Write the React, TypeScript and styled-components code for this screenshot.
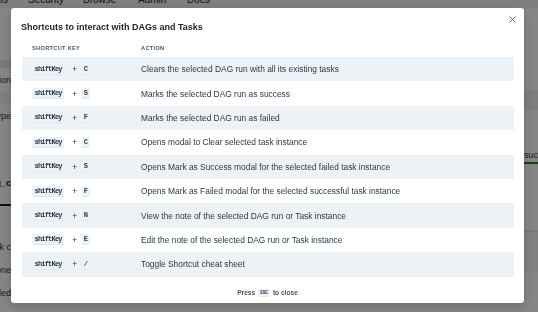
import React from 'react';
import styled, { createGlobalStyle } from 'styled-components';

const GlobalStyle = createGlobalStyle`
  html, body {
    margin: 0;
    padding: 0;
  }
  body {
    width: 538px;
    height: 312px;
    overflow: hidden;
    background: #fff;
    font-family: "Liberation Sans", Arial, sans-serif;
  }
`;

// page behind the modal
const Page = styled.div`
  display: flex;
  flex-direction: column;
  height: 312px;
`;

const TopNav = styled.div`
  display: flex;
  align-items: flex-end;
  height: 8px;
  background: #f2f2f2;
  overflow: hidden;
`;

const NavLink = styled.span<{ $w: number; $clip?: boolean }>`
  width: ${(p) => p.$w}px;
  box-sizing: border-box;
  flex: none;
  display: flex;
  justify-content: ${(p) => (p.$clip ? 'flex-end' : 'flex-start')};
  padding-right: ${(p) => (p.$clip ? 20 : 0)}px;
  overflow: hidden;
  font-size: 10px;
  line-height: 10px;
  margin-bottom: 3px;
  color: #222;
  white-space: nowrap;
`;

const PageBody = styled.div`
  flex: 1;
  display: flex;
`;

const SideCol = styled.div<{ $w: number }>`
  width: ${(p) => p.$w}px;
  flex: none;
  display: flex;
  flex-direction: column;
  overflow: hidden;
`;

const SideRow = styled.div<{ $h: number; $bg?: string; $end?: boolean; $bold?: boolean; $line?: string }>`
  height: ${(p) => p.$h}px;
  flex: none;
  display: flex;
  align-items: center;
  justify-content: ${(p) => (p.$end ? 'flex-end' : 'flex-start')};
  background: ${(p) => p.$bg || 'transparent'};
  border-bottom: ${(p) => (p.$line ? `2px solid ${p.$line}` : 'none')};
  font-size: 9px;
  font-weight: ${(p) => (p.$bold ? 700 : 400)};
  color: ${(p) => (p.$bold ? '#111' : '#333')};
  white-space: nowrap;
`;

const MainArea = styled.div`
  flex: 1;
`;

// modal
const Overlay = styled.div`
  position: fixed;
  inset: 0;
  background: rgba(0, 0, 0, 0.48);
  display: flex;
  align-items: flex-start;
  padding: 8px 0 0 11px;
`;

const Modal = styled.section`
  position: relative;
  width: 513px;
  height: 295px;
  background: #fff;
  border-radius: 3px;
  box-shadow: 0 4px 10px rgba(0, 0, 0, 0.2);
  display: flex;
  flex-direction: column;
  box-sizing: border-box;
`;

const Header = styled.header`
  height: 30px;
  box-sizing: border-box;
  padding: 8px 10px 0;
  display: flex;
  align-items: center;
  font-size: 9px;
  font-weight: 700;
  color: #1a202c;
`;

const CloseButton = styled.button`
  position: absolute;
  top: 3px;
  right: 4px;
  width: 16px;
  height: 16px;
  padding: 0;
  border: 0;
  background: transparent;
  display: flex;
  align-items: center;
  justify-content: center;
  color: #4a5568;
`;

const Body = styled.div`
  padding: 0 10px 0 11px;
`;

const Table = styled.table`
  width: 100%;
  border-collapse: collapse;
  table-layout: fixed;
`;

const HeadCell = styled.th<{ $w?: number }>`
  width: ${(p) => (p.$w ? `${p.$w}px` : 'auto')};
  height: 19px;
  padding: 0 10px;
  text-align: left;
  font-size: 5.6px;
  font-weight: 700;
  letter-spacing: 0.06em;
  text-transform: uppercase;
  color: #4a5568;
`;

const Row = styled.tr`
  height: 24.4px;
  &:nth-of-type(odd) {
    background: #edf2f7;
  }
`;

const Cell = styled.td`
  padding: 0 10px;
  font-size: 8.4px;
  color: #2d3748;
  white-space: nowrap;
`;

const Combo = styled.div`
  display: flex;
  align-items: center;
`;

const Kbd = styled.kbd<{ $small?: boolean }>`
  display: inline-flex;
  align-items: center;
  height: ${(p) => (p.$small ? 8 : 11)}px;
  box-sizing: border-box;
  padding: 0 ${(p) => (p.$small ? 2 : 2.5)}px;
  background: #edf2f7;
  border-bottom: 1px solid #e2e8f0;
  border-radius: 2px;
  font-family: "Liberation Mono", "DejaVu Sans Mono", monospace;
  font-weight: 700;
  font-size: ${(p) => (p.$small ? 4.8 : 7)}px;
  letter-spacing: ${(p) => (p.$small ? -0.3 : -0.8)}px;
  color: #2d3748;
`;

const Plus = styled.span`
  margin: 0 4px 0 8px;
  font-size: 8.4px;
  color: #2d3748;
`;

const Footer = styled.footer`
  flex: 1;
  display: flex;
  align-items: center;
  justify-content: center;
  gap: 3px;
  padding-top: 6px;
  font-size: 6.6px;
  font-weight: 700;
  color: #4a5568;
`;

const shortcuts: [string, string][] = [
  ['C', 'Clears the selected DAG run with all its existing tasks'],
  ['S', 'Marks the selected DAG run as success'],
  ['F', 'Marks the selected DAG run as failed'],
  ['C', 'Opens modal to Clear selected task instance'],
  ['S', 'Opens Mark as Success modal for the selected failed task instance'],
  ['F', 'Opens Mark as Failed modal for the selected successful task instance'],
  ['N', 'View the note of the selected DAG run or Task instance'],
  ['E', 'Edit the note of the selected DAG run or Task instance'],
  ['/', 'Toggle Shortcut cheat sheet'],
];

const leftRows = [
  { h: 52, text: '' },
  { h: 8, text: '', bg: '#e6e6e6' },
  { h: 24, text: 'Duration' },
  { h: 12, text: '', bg: '#f4f4f4' },
  { h: 24, text: 'Run type' },
  { h: 44, text: '' },
  { h: 22, text: 'dag_c', bold: true },
  { h: 10, text: '', line: '#222' },
  { h: 30, text: '' },
  { h: 22, text: 'Task c' },
  { h: 24, text: 'Done' },
  { h: 22, text: 'Failed' },
];

const rightRows = [
  { h: 82, text: '' },
  { h: 20, text: '', bg: '#f1f1f1' },
  { h: 38, text: '' },
  { h: 14, text: 'success', line: '#2e7d32' },
  { h: 66, text: '', line: '#e4e4e4' },
  { h: 40, text: '', bg: '#f6f6f6' },
];

const App = () => {
  return (
    <>
      <GlobalStyle />
      <Page>
        <TopNav>
          <NavLink $w={28} $clip>Details</NavLink>
          <NavLink $w={55}>Security</NavLink>
          <NavLink $w={55}>Browse</NavLink>
          <NavLink $w={49}>Admin</NavLink>
          <NavLink $w={40}>Docs</NavLink>
        </TopNav>
        <PageBody>
          <SideCol $w={11}>
            {leftRows.map((r, i) => (
              <SideRow key={i} $h={r.h} $bg={r.bg} $end $bold={r.bold} $line={r.line}>
                {r.text}
              </SideRow>
            ))}
          </SideCol>
          <MainArea />
          <SideCol $w={14}>
            {rightRows.map((r, i) => (
              <SideRow key={i} $h={r.h} $bg={r.bg} $line={r.line}>
                {r.text}
              </SideRow>
            ))}
          </SideCol>
        </PageBody>
      </Page>

      <Overlay>
        <Modal>
          <Header>Shortcuts to interact with DAGs and Tasks</Header>
          <CloseButton aria-label="Close">
            <svg width="7" height="7" viewBox="0 0 7 7">
              <path d="M0.5 0.5 L6.5 6.5 M6.5 0.5 L0.5 6.5" stroke="currentColor" strokeWidth="0.9" />
            </svg>
          </CloseButton>
          <Body>
            <Table>
              <thead>
                <tr>
                  <HeadCell $w={89}>Shortcut key</HeadCell>
                  <HeadCell>Action</HeadCell>
                </tr>
              </thead>
              <tbody>
                {shortcuts.map(([key, action], i) => (
                  <Row key={i}>
                    <Cell>
                      <Combo>
                        <Kbd>shiftKey</Kbd>
                        <Plus>+</Plus>
                        <Kbd>{key}</Kbd>
                      </Combo>
                    </Cell>
                    <Cell>{action}</Cell>
                  </Row>
                ))}
              </tbody>
            </Table>
          </Body>
          <Footer>
            Press <Kbd $small>ESC</Kbd> to close
          </Footer>
        </Modal>
      </Overlay>
    </>
  );
};

export default App;
